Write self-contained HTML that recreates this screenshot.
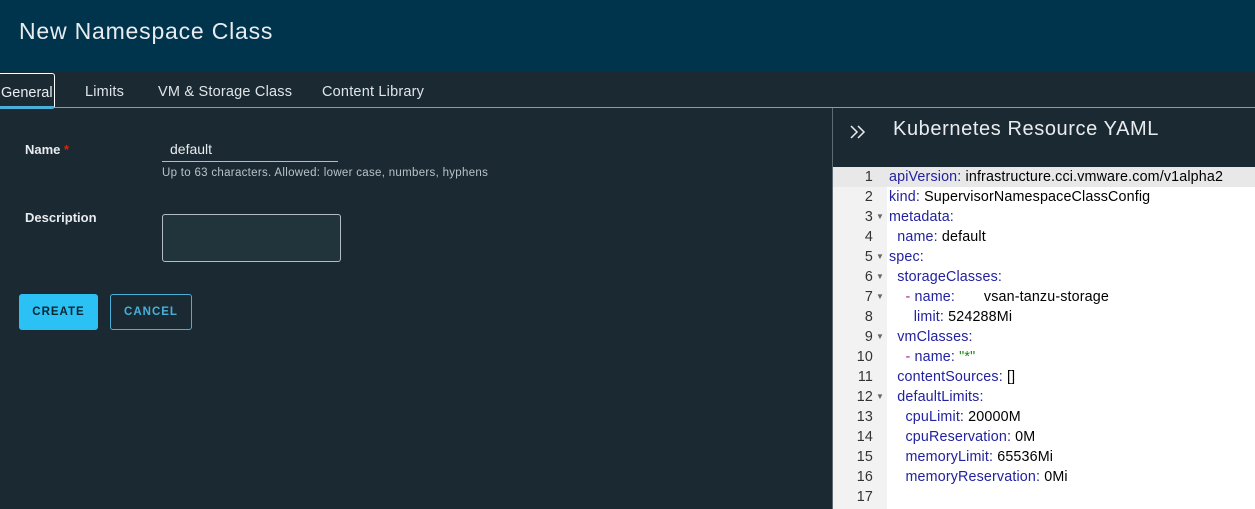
<!DOCTYPE html>
<html><head><meta charset="utf-8"><style>
*{margin:0;padding:0;box-sizing:border-box}
body{width:1255px;height:509px;overflow:hidden;background:#1b2a32;font-family:"Liberation Sans",sans-serif;position:relative}
.hdr{position:absolute;left:0;top:0;width:1255px;height:72px;background:#00344c;color:#e9ecef;font-size:23px;letter-spacing:0.8px;padding:18px 0 0 19px}
.tabs{position:absolute;top:72px;left:0;width:1255px;height:36px;border-bottom:1px solid #8c9aa3;}
.tab{position:absolute;top:12px;color:#dfe4e8;font-size:14.5px;letter-spacing:0.2px}
.gen{position:absolute;left:-2px;top:1px;width:57px;height:36px;border:1px solid #fff;border-radius:3px;border-bottom:3px solid #49afd9;color:#e9ecef;font-size:14.5px;padding:11px 0 0 2px}
.lbl{position:absolute;color:#e9ecef;font-size:13px;font-weight:bold}
.right{position:absolute;left:832px;top:108px;width:423px;height:401px;background:#1b2a32;border-left:1px solid #5f6b72}
.rt{position:absolute;left:60px;top:10px;color:#e9ecef;font-size:20px;letter-spacing:0.6px}
.ed{position:absolute;left:0;top:59px;width:423px;height:342px;background:#fff}
.gut{position:absolute;left:0;top:0;width:54px;height:342px;background:#f2f2f2}
.ln{position:absolute;left:0;width:423px;height:20px;font-size:14.3px;line-height:20px;color:#000;letter-spacing:0.15px}
.n{position:absolute;right:383px;color:#333;text-align:right}
.f{position:absolute;left:43px;color:#666;font-size:8px}
.c{position:absolute;left:56px;white-space:pre}
.k{color:#2222a0}.m{color:#b5179e}.s{color:#1a8a1a}
</style></head><body>
<div class="hdr">New Namespace Class</div>
<div class="tabs">
<div class="gen">General</div>
<div class="tab" style="left:85px">Limits</div>
<div class="tab" style="left:158px">VM &amp; Storage Class</div>
<div class="tab" style="left:322px">Content Library</div>
</div>
<div class="lbl" style="left:25px;top:142px">Name <span style="color:#e12200">*</span></div>
<div style="position:absolute;left:170px;top:141px;color:#e9ecef;font-size:14px">default</div>
<div style="position:absolute;left:162px;top:161px;width:176px;height:1px;background:#b3bcc2"></div>
<div style="position:absolute;left:162px;top:167px;color:#b9c3c9;font-size:11.5px;letter-spacing:0.3px">Up to 63 characters. Allowed: lower case, numbers, hyphens</div>
<div class="lbl" style="left:25px;top:210px">Description</div>
<div style="position:absolute;left:162px;top:214px;width:179px;height:48px;border:1px solid #b3bcc2;border-radius:3px;background:#21333b"></div>
<div style="position:absolute;left:19px;top:294px;width:79px;height:36px;background:#2bc1f5;border-radius:3px;color:#0a2530;font-size:11.5px;font-weight:bold;letter-spacing:1px;text-align:center;line-height:36px">CREATE</div>
<div style="position:absolute;left:110px;top:294px;width:82px;height:36px;border:1px solid #49afd9;border-radius:3px;color:#49afd9;font-size:11.5px;font-weight:bold;letter-spacing:1px;text-align:center;line-height:34px">CANCEL</div>
<div class="right">
<svg style="position:absolute;left:16px;top:16px" width="18" height="16" viewBox="0 0 18 16"><path d="M2 2l6 6-6 6M9 2l6 6-6 6" fill="none" stroke="#e9ecef" stroke-width="1.5"/></svg>
<div class="rt">Kubernetes Resource YAML</div>
<div class="ed"><div class="gut"></div>
<div class="ln" style="top:0;background:#e8e8e8"><span class="n">1</span><span class="c"><span class="k">apiVersion:</span> infrastructure.cci.vmware.com/v1alpha2</span></div>
<div class="ln" style="top:20px"><span class="n">2</span><span class="c"><span class="k">kind:</span> SupervisorNamespaceClassConfig</span></div>
<div class="ln" style="top:40px"><span class="n">3</span><span class="f">▼</span><span class="c"><span class="k">metadata:</span></span></div>
<div class="ln" style="top:60px"><span class="n">4</span><span class="c">  <span class="k">name:</span> default</span></div>
<div class="ln" style="top:80px"><span class="n">5</span><span class="f">▼</span><span class="c"><span class="k">spec:</span></span></div>
<div class="ln" style="top:100px"><span class="n">6</span><span class="f">▼</span><span class="c">  <span class="k">storageClasses:</span></span></div>
<div class="ln" style="top:120px"><span class="n">7</span><span class="f">▼</span><span class="c">    <span class="m">-</span> <span class="k">name:</span>       vsan-tanzu-storage</span></div>
<div class="ln" style="top:140px"><span class="n">8</span><span class="c">      <span class="k">limit:</span> 524288Mi</span></div>
<div class="ln" style="top:160px"><span class="n">9</span><span class="f">▼</span><span class="c">  <span class="k">vmClasses:</span></span></div>
<div class="ln" style="top:180px"><span class="n">10</span><span class="c">    <span class="m">-</span> <span class="k">name:</span> <span class="s">"*"</span></span></div>
<div class="ln" style="top:200px"><span class="n">11</span><span class="c">  <span class="k">contentSources:</span> []</span></div>
<div class="ln" style="top:220px"><span class="n">12</span><span class="f">▼</span><span class="c">  <span class="k">defaultLimits:</span></span></div>
<div class="ln" style="top:240px"><span class="n">13</span><span class="c">    <span class="k">cpuLimit:</span> 20000M</span></div>
<div class="ln" style="top:260px"><span class="n">14</span><span class="c">    <span class="k">cpuReservation:</span> 0M</span></div>
<div class="ln" style="top:280px"><span class="n">15</span><span class="c">    <span class="k">memoryLimit:</span> 65536Mi</span></div>
<div class="ln" style="top:300px"><span class="n">16</span><span class="c">    <span class="k">memoryReservation:</span> 0Mi</span></div>
<div class="ln" style="top:320px"><span class="n">17</span></div>
</div></div>
</body></html>
